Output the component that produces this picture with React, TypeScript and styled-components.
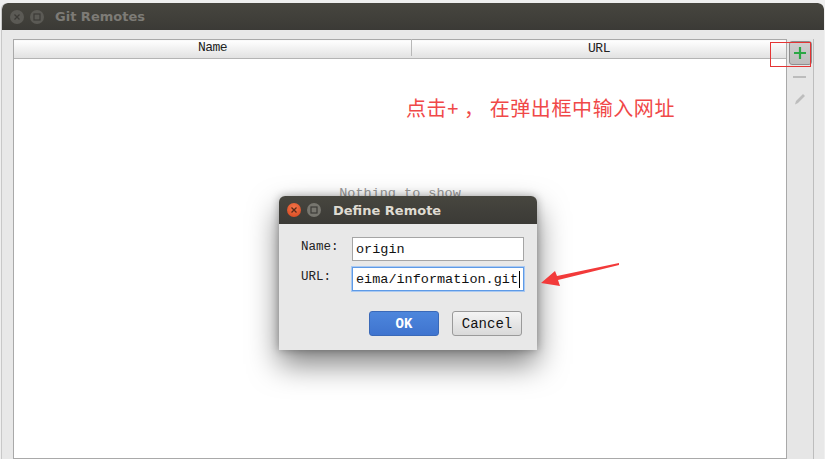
import React from "react";
import styled, { createGlobalStyle } from "styled-components";

const Global = createGlobalStyle`
  html, body { margin: 0; padding: 0; background: #efefef; overflow: hidden; }
  #root { width: 825px; height: 459px; }
`;

const Page = styled.div`
  position: relative;
  width: 825px;
  height: 459px;
  padding-top: 3px;
  box-sizing: border-box;
  background: #efefef;
`;

const Window = styled.div`
  margin-left: 1px;
  width: 822px;
  height: 456px;
  display: flex;
  flex-direction: column;
  background: #e8e8e8;
  border-left: 1px solid #c8c8c8;
  border-radius: 6px 6px 0 0;
  overflow: hidden;
`;

const TitleBar = styled.div<{ $h: number }>`
  height: ${(p) => p.$h}px;
  flex: none;
  display: flex;
  align-items: center;
  background: linear-gradient(#47463f, #3b3a36);
  border-radius: 6px 6px 0 0;
  padding-left: 8px;
  gap: 6px;
`;

const Circle = styled.div<{ $bg: string }>`
  width: 14px;
  height: 14px;
  border-radius: 50%;
  background: ${(p) => p.$bg};
  display: flex;
  align-items: center;
  justify-content: center;
  flex: none;
`;

const TitleText = styled.span<{ $color: string; $ml: number }>`
  font-family: "DejaVu Sans", sans-serif;
  font-weight: bold;
  font-size: 13px;
  color: ${(p) => p.$color};
  margin-left: ${(p) => p.$ml}px;
`;

const Body = styled.div`
  flex: 1;
  display: flex;
  padding: 9px 0 0 11px;
  min-height: 0;
`;

const Table = styled.div`
  width: 772px;
  border: 1px solid #a9a9a9;
  background: #fff;
  display: flex;
  flex-direction: column;
`;

const Header = styled.div`
  height: 17px;
  display: grid;
  grid-template-columns: 398px 1fr;
  background: linear-gradient(#fefefe, #e2e2e2);
  border-bottom: 1px solid #b4b4b4;
  border-top: 1px solid #fafafa;
`;

const HeaderCell = styled.div<{ $sep?: boolean }>`
  display: flex;
  align-items: center;
  justify-content: center;
  font-family: "Liberation Mono", "DejaVu Sans Mono", monospace;
  font-size: 13px;
  color: #222;
  letter-spacing: -0.5px;
  border-right: ${(p) => (p.$sep ? "1px solid #b8b8b8" : "none")};
  margin: ${(p) => (p.$sep ? "2px 0" : "0")};
  margin-top: -2px;
`;

const EmptyArea = styled.div`
  flex: 1;
  display: flex;
  justify-content: center;
  padding-top: 127px;
`;

const EmptyText = styled.span`
  font-family: "Liberation Mono", monospace;
  font-size: 13.5px;
  color: #9a9a9a;
`;

const ToolColumn = styled.div`
  width: 26px;
  background: #e6e6e6;
  border-right: 1px solid #bdbdbd;
  display: flex;
  flex-direction: column;
  align-items: center;
  padding-top: 2px;
`;

const PlusButton = styled.div`
  width: 21px;
  height: 22px;
  border: 1px solid #8e8e8e;
  border-radius: 3px;
  background: linear-gradient(#cfcfcf, #bdbdbd);
  display: flex;
  align-items: center;
  justify-content: center;
`;

const ToolIcon = styled.div<{ $h: number }>`
  height: ${(p) => p.$h}px;
  display: flex;
  align-items: center;
  justify-content: center;
`;

const Dialog = styled.div`
  position: absolute;
  left: 279px;
  top: 196px;
  width: 258px;
  height: 154px;
  display: flex;
  flex-direction: column;
  background: #e8e8e8;
  border-radius: 6px 6px 0 0;
  box-shadow: 0 14px 30px rgba(0, 0, 0, 0.5), 0 0 8px rgba(0, 0, 0, 0.3);
`;

const DialogBody = styled.div`
  flex: 1;
  display: flex;
  flex-direction: column;
  padding: 13px 15px 0 22px;
`;

const FormGrid = styled.div`
  display: grid;
  grid-template-columns: 51px 172px;
  row-gap: 6px;
  align-items: start;
`;

const Label = styled.span`
  font-family: "Liberation Mono", monospace;
  font-size: 12.5px;
  color: #222;
  line-height: 24px;
  margin-top: -2px;
`;

const Input = styled.div<{ $focus?: boolean }>`
  height: 24px;
  box-sizing: border-box;
  background: #fff;
  border: 1px solid ${(p) => (p.$focus ? "#5e9ae6" : "#a5a5a5")};
  box-shadow: ${(p) => (p.$focus ? "0 0 0 1px #a9c9f2" : "none")};
  display: flex;
  align-items: center;
  padding-left: 3px;
  font-family: "Liberation Mono", monospace;
  font-size: 13.5px;
  color: #111;
  overflow: hidden;
  white-space: nowrap;
`;

const Caret = styled.span`
  display: inline-block;
  width: 1px;
  height: 17px;
  background: #000;
  margin-left: 1px;
`;

const ButtonRow = styled.div`
  display: flex;
  justify-content: flex-end;
  gap: 13px;
  margin-top: 20px;
`;

const Button = styled.div<{ $primary?: boolean }>`
  width: 70px;
  height: 25px;
  box-sizing: border-box;
  border-radius: 3px;
  border: 1px solid ${(p) => (p.$primary ? "#3a69b8" : "#9a9a9a")};
  background: ${(p) =>
    p.$primary ? "linear-gradient(#4d86dc, #3f74cf)" : "linear-gradient(#f4f4f4, #d9d9d9)"};
  color: ${(p) => (p.$primary ? "#fff" : "#111")};
  font-family: "Liberation Mono", monospace;
  font-size: 14px;
  font-weight: ${(p) => (p.$primary ? "bold" : "normal")};
  display: flex;
  align-items: center;
  justify-content: center;
`;

const Annotation = styled.div`
  position: absolute;
  left: 406px;
  top: 96px;
  font-family: "Noto Sans CJK SC", sans-serif;
  font-size: 20px;
  line-height: 24px;
  color: #f04848;
  white-space: pre;
  letter-spacing: 0.6px;
`;

const RedBox = styled.div`
  position: absolute;
  left: 770px;
  top: 42px;
  width: 41px;
  height: 25px;
  border: 1px solid #e43434;
  box-sizing: border-box;
`;

const Arrow = styled.svg`
  position: absolute;
  left: 535px;
  top: 255px;
`;

export default function App() {
  return (
    <Page>
      <Global />
      <Window>
        <TitleBar $h={27}>
          <Circle $bg="#5b5a55">
            <svg width="8" height="8" viewBox="0 0 8 8">
              <path d="M1.5 1.5 L6.5 6.5 M6.5 1.5 L1.5 6.5" stroke="#3c3b37" strokeWidth="1.3" />
            </svg>
          </Circle>
          <Circle $bg="#5b5a55">
            <svg width="8" height="8" viewBox="0 0 8 8">
              <rect x="1" y="1" width="6" height="6" fill="none" stroke="#3c3b37" strokeWidth="1.2" />
            </svg>
          </Circle>
          <TitleText $color="#7d7b76" $ml={5}>Git Remotes</TitleText>
        </TitleBar>
        <Body>
          <Table>
            <Header>
              <HeaderCell $sep>Name</HeaderCell>
              <HeaderCell>URL</HeaderCell>
            </Header>
            <EmptyArea>
              <EmptyText>Nothing to show</EmptyText>
            </EmptyArea>
          </Table>
          <ToolColumn>
            <PlusButton>
              <svg width="14" height="14" viewBox="0 0 14 14">
                <path d="M7 1 V13 M1 7 H13" stroke="#2aa745" strokeWidth="2.2" />
              </svg>
            </PlusButton>
            <ToolIcon $h={24}>
              <svg width="14" height="4" viewBox="0 0 14 4">
                <rect x="0" y="1" width="13" height="2" fill="#bcbcbc" />
              </svg>
            </ToolIcon>
            <ToolIcon $h={20}>
              <svg width="14" height="14" viewBox="0 0 14 14">
                <path d="M2 12.5 L3 9 L10 2 L12 4 L5 11 Z" fill="#bdbdbd" />
              </svg>
            </ToolIcon>
          </ToolColumn>
        </Body>
      </Window>

      <Annotation>点击+ ， 在弹出框中输入网址</Annotation>
      <RedBox />

      <Dialog>
        <TitleBar $h={28}>
          <Circle $bg="radial-gradient(circle at 50% 35%, #f4764a, #d5441c)">
            <svg width="8" height="8" viewBox="0 0 8 8">
              <path d="M1.5 1.5 L6.5 6.5 M6.5 1.5 L1.5 6.5" stroke="#5a2a18" strokeWidth="1.3" />
            </svg>
          </Circle>
          <Circle $bg="#77766f">
            <svg width="8" height="8" viewBox="0 0 8 8">
              <rect x="1" y="1" width="6" height="6" fill="none" stroke="#3c3b37" strokeWidth="1.2" />
            </svg>
          </Circle>
          <TitleText $color="#dfdbd2" $ml={6}>Define Remote</TitleText>
        </TitleBar>
        <DialogBody>
          <FormGrid>
            <Label>Name:</Label>
            <Input>origin</Input>
            <Label>URL:</Label>
            <Input $focus>
              eima/information.git
              <Caret />
            </Input>
          </FormGrid>
          <ButtonRow>
            <Button $primary>OK</Button>
            <Button>Cancel</Button>
          </ButtonRow>
        </DialogBody>
      </Dialog>

      <Arrow width="90" height="36" viewBox="535 255 90 36">
        <polygon
          points="619,263 557,276 555,271 541,283 560,286 558,280 619,265"
          fill="#f23a3a"
        />
      </Arrow>
    </Page>
  );
}
